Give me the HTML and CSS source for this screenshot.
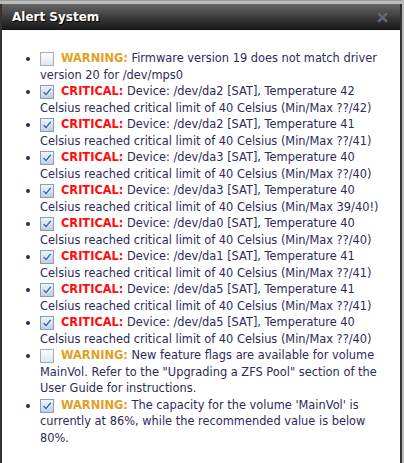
FILE: index.html
```html
<!DOCTYPE html>
<html>
<head>
<meta charset="utf-8">
<link rel="stylesheet" href="styles.css">
</head>
<body>
<div class="page">
  <div class="dialog">
    <div class="titlebar">
      <span class="title">Alert System</span>
      <svg class="close" viewBox="0 0 11 11" width="11" height="11"><path d="M2 2 L9 9 M9 2 L2 9" stroke="#5d6878" stroke-width="2.6" stroke-linecap="square"/></svg>
    </div>
    <div class="content">
      <ul class="alerts">
        <li><span class="cb"></span><b class="warn">WARNING:</b> Firmware version 19 does not match driver<br>version 20 for /dev/mps0</li>
        <li><span class="cb on"><svg viewBox="0 0 12 12" width="12" height="12"><path d="M2.5 6 L5 8.6 L9.8 2.8" fill="none" stroke="#fff" stroke-width="3.2"/><path d="M2.5 6 L5 8.6 L9.8 2.8" fill="none" stroke="#3a76c0" stroke-width="1.7"/></svg></span><b class="crit">CRITICAL:</b> Device: /dev/da2 [SAT], Temperature 42<br>Celsius reached critical limit of 40 Celsius (Min/Max ??/42)</li>
        <li><span class="cb on"><svg viewBox="0 0 12 12" width="12" height="12"><path d="M2.5 6 L5 8.6 L9.8 2.8" fill="none" stroke="#fff" stroke-width="3.2"/><path d="M2.5 6 L5 8.6 L9.8 2.8" fill="none" stroke="#3a76c0" stroke-width="1.7"/></svg></span><b class="crit">CRITICAL:</b> Device: /dev/da2 [SAT], Temperature 41<br>Celsius reached critical limit of 40 Celsius (Min/Max ??/41)</li>
        <li><span class="cb on"><svg viewBox="0 0 12 12" width="12" height="12"><path d="M2.5 6 L5 8.6 L9.8 2.8" fill="none" stroke="#fff" stroke-width="3.2"/><path d="M2.5 6 L5 8.6 L9.8 2.8" fill="none" stroke="#3a76c0" stroke-width="1.7"/></svg></span><b class="crit">CRITICAL:</b> Device: /dev/da3 [SAT], Temperature 40<br>Celsius reached critical limit of 40 Celsius (Min/Max ??/40)</li>
        <li><span class="cb on"><svg viewBox="0 0 12 12" width="12" height="12"><path d="M2.5 6 L5 8.6 L9.8 2.8" fill="none" stroke="#fff" stroke-width="3.2"/><path d="M2.5 6 L5 8.6 L9.8 2.8" fill="none" stroke="#3a76c0" stroke-width="1.7"/></svg></span><b class="crit">CRITICAL:</b> Device: /dev/da3 [SAT], Temperature 40<br>Celsius reached critical limit of 40 Celsius (Min/Max 39/40!)</li>
        <li><span class="cb on"><svg viewBox="0 0 12 12" width="12" height="12"><path d="M2.5 6 L5 8.6 L9.8 2.8" fill="none" stroke="#fff" stroke-width="3.2"/><path d="M2.5 6 L5 8.6 L9.8 2.8" fill="none" stroke="#3a76c0" stroke-width="1.7"/></svg></span><b class="crit">CRITICAL:</b> Device: /dev/da0 [SAT], Temperature 40<br>Celsius reached critical limit of 40 Celsius (Min/Max ??/40)</li>
        <li><span class="cb on"><svg viewBox="0 0 12 12" width="12" height="12"><path d="M2.5 6 L5 8.6 L9.8 2.8" fill="none" stroke="#fff" stroke-width="3.2"/><path d="M2.5 6 L5 8.6 L9.8 2.8" fill="none" stroke="#3a76c0" stroke-width="1.7"/></svg></span><b class="crit">CRITICAL:</b> Device: /dev/da1 [SAT], Temperature 41<br>Celsius reached critical limit of 40 Celsius (Min/Max ??/41)</li>
        <li><span class="cb on"><svg viewBox="0 0 12 12" width="12" height="12"><path d="M2.5 6 L5 8.6 L9.8 2.8" fill="none" stroke="#fff" stroke-width="3.2"/><path d="M2.5 6 L5 8.6 L9.8 2.8" fill="none" stroke="#3a76c0" stroke-width="1.7"/></svg></span><b class="crit">CRITICAL:</b> Device: /dev/da5 [SAT], Temperature 41<br>Celsius reached critical limit of 40 Celsius (Min/Max ??/41)</li>
        <li><span class="cb on"><svg viewBox="0 0 12 12" width="12" height="12"><path d="M2.5 6 L5 8.6 L9.8 2.8" fill="none" stroke="#fff" stroke-width="3.2"/><path d="M2.5 6 L5 8.6 L9.8 2.8" fill="none" stroke="#3a76c0" stroke-width="1.7"/></svg></span><b class="crit">CRITICAL:</b> Device: /dev/da5 [SAT], Temperature 40<br>Celsius reached critical limit of 40 Celsius (Min/Max ??/40)</li>
        <li><span class="cb"></span><b class="warn">WARNING:</b> New feature flags are available for volume<br>MainVol. Refer to the "Upgrading a ZFS Pool" section of the<br>User Guide for instructions.</li>
        <li><span class="cb on"><svg viewBox="0 0 12 12" width="12" height="12"><path d="M2.5 6 L5 8.6 L9.8 2.8" fill="none" stroke="#fff" stroke-width="3.2"/><path d="M2.5 6 L5 8.6 L9.8 2.8" fill="none" stroke="#3a76c0" stroke-width="1.7"/></svg></span><b class="warn">WARNING:</b> The capacity for the volume 'MainVol' is<br>currently at 86%, while the recommended value is below<br>80%.</li>
      </ul>
    </div>
  </div>
</div>
</body>
</html>
```
FILE: styles.css
```css
html, body {
  margin: 0;
  padding: 0;
}
body {
  background: #bcbcbc;
  font-family: "DejaVu Sans", Verdana, sans-serif;
  overflow: hidden;
}
.page {
  width: 402px;
  height: 463px;
  padding-top: 3px;
  box-sizing: border-box;
  border-top: 1px solid #9a9a9a;
}
.dialog {
  height: 100%;
  box-sizing: border-box;
  background: #ffffff;
  border-left: 2px solid #333333;
  border-right: 2px solid #333333;
}
.titlebar {
  height: 25px;
  display: flex;
  align-items: center;
  justify-content: space-between;
  padding: 0 12px 0 10px;
  background: linear-gradient(#666666, #2e2e2e 70%, #1c1c1c);
  border-bottom: 1px solid #111111;
}
.title {
  color: #ffffff;
  font-weight: bold;
  font-size: 12px;
  text-shadow: 1px 1px 1px #000000;
  margin-top: 1px;
}
.close {
  display: block;
  margin-top: 1px;
}
.content {
  padding-top: 20px;
}
.alerts {
  margin: 0;
  padding-left: 38px;
  font-size: 11.4px;
  line-height: 16.5px;
  color: #2e2a5a;
  white-space: nowrap;
}
.alerts li {
  margin: 0;
}
.cb {
  display: inline-block;
  box-sizing: border-box;
  width: 14px;
  height: 14px;
  border: 1px solid #a4adbd;
  background: linear-gradient(#fdfdfe, #dfe5ee);
  vertical-align: -4px;
  margin-right: 7px;
}
.cb.on {
  background: linear-gradient(#eef3fa, #bccde4);
  border-color: #8e9cb3;
}
.cb svg {
  display: block;
}
.warn {
  color: #e2a022;
}
.crit {
  color: #ff0d0d;
}
```
